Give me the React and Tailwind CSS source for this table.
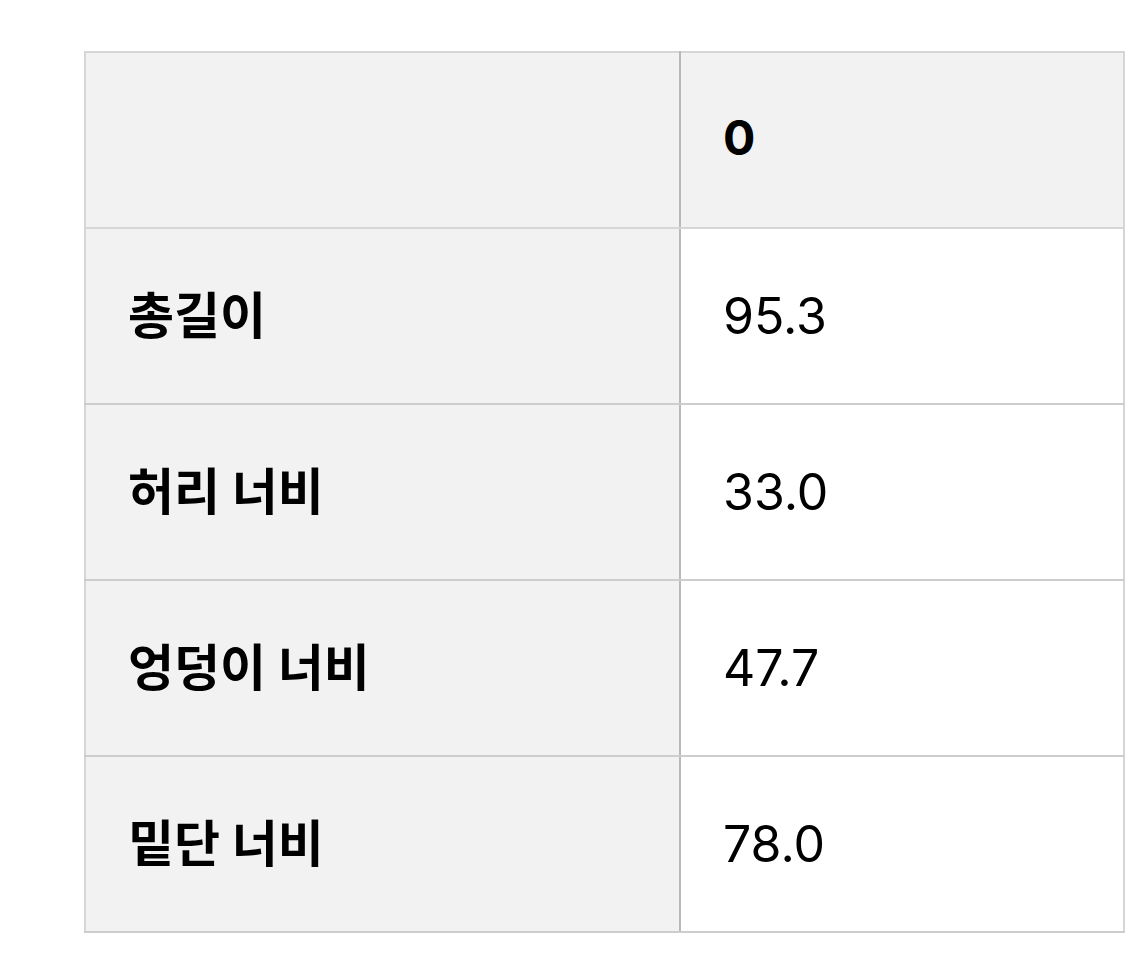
const rows = [
	{ label: '총길이', value: '95.3' },
	{ label: '허리 너비', value: '33.0' },
	{ label: '엉덩이 너비', value: '47.7' },
	{ label: '밑단 너비', value: '78.0' },
];

const font = { fontFamily: 'Inter, "Noto Sans CJK KR", sans-serif' };

export default function App() {
	return (
		<div className="min-h-[953px] bg-white pt-[51px] pl-[84px]" style={font}>
			<table className="w-[1041px] border-collapse text-[50px] text-black">
				<thead>
					<tr className="h-[176px] bg-[#f2f2f2]">
						<th className="w-[595px] border-2 border-[#d6d6d6] border-r-[#b9b9b9]" />
						<th className="border-2 border-[#d6d6d6] border-l-[#b9b9b9] pl-[42px] pb-[4px] text-left text-[48px] font-bold">
							0
						</th>
					</tr>
				</thead>
				<tbody>
					{rows.map((r, k) => (
						<tr key={k} className="h-[176px]">
							<th className="border-2 border-[#cdcdcd] border-l-[#d6d6d6] border-r-[#b9b9b9] bg-[#f2f2f2] pl-[42px] text-left font-bold">
								{r.label}
							</th>
							<td className="border-2 border-[#cdcdcd] border-l-[#b9b9b9] border-r-[#d6d6d6] bg-white pl-[42px]">
								{r.value}
							</td>
						</tr>
					))}
				</tbody>
			</table>
		</div>
	);
}
